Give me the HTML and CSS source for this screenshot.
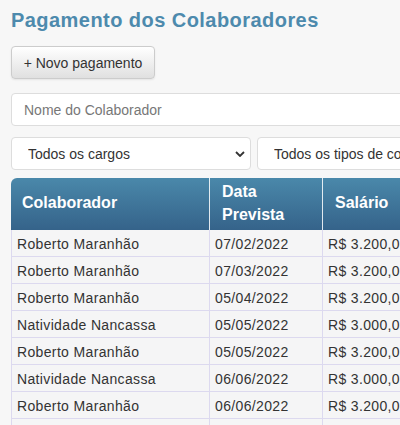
FILE: index.html
```html
<!DOCTYPE html>
<html lang="pt-BR">
<head>
    <meta charset="UTF-8">
    <title>Pagamento dos Colaboradores</title>
    <link rel="stylesheet" href="styles.css">
</head>
<body>
    <div class="page">
        <h1 class="title">Pagamento dos Colaboradores</h1>
        <button class="btn" type="button">+ Novo pagamento</button>
        <input class="search" type="text" placeholder="Nome do Colaborador">
        <div class="filters">
            <select class="select select-cargo">
                <option>Todos os cargos</option>
            </select>
            <select class="select select-tipo">
                <option>Todos os tipos de contrato</option>
            </select>
        </div>
        <table class="grid">
            <thead>
                <tr>
                    <th class="c-nome">Colaborador</th>
                    <th class="c-data">Data Prevista</th>
                    <th class="c-sal">Salário</th>
                    <th class="c-tipo">Tipo</th>
                </tr>
            </thead>
            <tbody>
                <tr><td>Roberto Maranhão</td><td>07/02/2022</td><td>R$ 3.200,00</td><td>CLT</td></tr>
                <tr><td>Roberto Maranhão</td><td>07/03/2022</td><td>R$ 3.200,00</td><td>CLT</td></tr>
                <tr><td>Roberto Maranhão</td><td>05/04/2022</td><td>R$ 3.200,00</td><td>CLT</td></tr>
                <tr><td>Natividade Nancassa</td><td>05/05/2022</td><td>R$ 3.000,00</td><td>CLT</td></tr>
                <tr><td>Roberto Maranhão</td><td>05/05/2022</td><td>R$ 3.200,00</td><td>CLT</td></tr>
                <tr><td>Natividade Nancassa</td><td>06/06/2022</td><td>R$ 3.000,00</td><td>CLT</td></tr>
                <tr><td>Roberto Maranhão</td><td>06/06/2022</td><td>R$ 3.200,00</td><td>CLT</td></tr>
                <tr><td>Natividade Nancassa</td><td>07/07/2022</td><td>R$ 3.000,00</td><td>CLT</td></tr>
            </tbody>
        </table>
    </div>
</body>
</html>
```

FILE: styles.css
```css
*{
    box-sizing: border-box;
}
html, body{
    margin: 0;
    padding: 0;
    background-color: #f7f7f7;
    font-family: "Liberation Sans", Arial, sans-serif;
    color: #333333;
    font-size: 14px;
}
.page{
    padding: 9px 11px 0;
    width: 600px;
}
.title{
    margin: 0;
    font-size: 20px;
    line-height: 23px;
    letter-spacing: 0.45px;
    font-weight: bold;
    color: #4d8aad;
}
.btn{
    display: block;
    margin-top: 14px;
    height: 33px;
    width: 144px;
    padding: 0;
    border: 1px solid #cccccc;
    border-radius: 4px;
    background: linear-gradient(#ffffff, #e0e0e0);
    box-shadow: 0 1px 2px rgba(0, 0, 0, 0.08);
    font-family: inherit;
    font-size: 14px;
    color: #333333;
}
.search{
    display: block;
    margin-top: 14px;
    width: 560px;
    height: 33px;
    padding: 0 12px;
    border: 1px solid #dddddd;
    border-radius: 4px;
    background-color: #ffffff;
    font-family: inherit;
    font-size: 14px;
}
.search::placeholder{
    color: #777777;
}
.filters{
    display: flex;
    gap: 6px;
    margin-top: 11px;
}
.select{
    height: 33px;
    padding: 0 16px;
    border: 1px solid #dddddd;
    border-radius: 4px;
    background: #ffffff url("data:image/svg+xml,%3Csvg xmlns='http://www.w3.org/2000/svg' width='10' height='6' viewBox='0 0 10 6'%3E%3Cpath d='M1 1l4 4 4-4' fill='none' stroke='%23333' stroke-width='1.8'/%3E%3C/svg%3E") no-repeat right 5px center;
    -webkit-appearance: none;
    appearance: none;
    font-family: inherit;
    font-size: 14px;
    color: #333333;
}
.select-cargo{
    width: 240px;
}
.select-tipo{
    width: 300px;
}
.grid{
    margin-top: 8px;
    border-collapse: separate;
    border-spacing: 0;
    width: 560px;
}
.grid th{
    padding: 3px 12px;
    line-height: 1.42857;
    font-size: 16px;
    font-weight: bold;
    color: #ffffff;
    text-align: left;
    vertical-align: middle;
    background: linear-gradient(#4a88aa, #35638a);
    border-right: 1px solid rgba(255, 255, 255, 0.85);
}
.grid th:first-child{
    border-top-left-radius: 6px;
    padding-left: 11px;
}
.grid th.c-nome{
    width: 199px;
}
.grid th.c-data{
    width: 113px;
}
.grid th.c-sal{
    width: 120px;
}
.grid td{
    padding: 4px 5px 2px;
    line-height: 20px;
    letter-spacing: 0.35px;
    border-right: 1px solid #dcd9ef;
    border-bottom: 1px solid #dcd9ef;
    background-color: #f5f5f6;
    white-space: nowrap;
}
.grid td:first-child{
    border-left: 1px solid #dcd9ef;
}
```
